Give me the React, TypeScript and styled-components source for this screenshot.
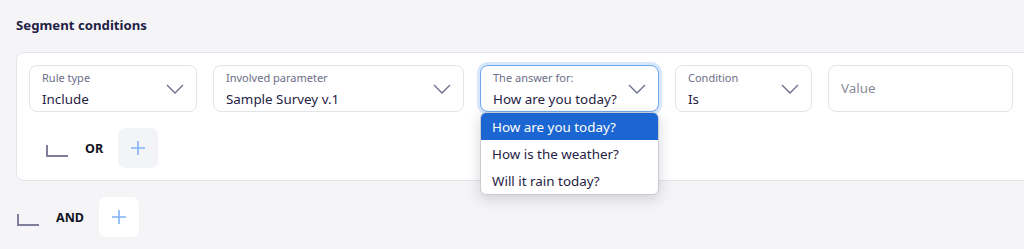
import styled, { createGlobalStyle } from 'styled-components';

const GlobalStyle = createGlobalStyle`
  html, body {
    margin: 0;
    padding: 0;
    background: #f5f5f8;
    font-family: "Noto Sans", "Open Sans", sans-serif;
    overflow: hidden;
  }
`

const Page = styled.div`
  width: 1024px;
  height: 249px;
  padding: 15px 0 0 16px;
  box-sizing: border-box;
  overflow: hidden;
`

const Title = styled.h2`
  margin: 0 0 17px 0;
  font-size: 13.2px;
  line-height: 20px;
  font-weight: 700;
  color: #1f2244;
`

const Card = styled.div`
  width: 1040px;
  box-sizing: border-box;
  background: #ffffff;
  border: 1px solid #e3e4ea;
  border-radius: 8px;
  padding: 12px 12px 12px 12px;
  display: flex;
  flex-direction: column;
  gap: 16px;
`

const FieldRow = styled.div`
  display: flex;
  gap: 16px;
`

const Field = styled.div<{ $width: number; $focused?: boolean }>`
  position: relative;
  width: ${p => p.$width}px;
  height: 47px;
  box-sizing: border-box;
  border: 1px solid ${p => (p.$focused ? '#6ea6ef' : '#e3e4ea')};
  box-shadow: ${p => (p.$focused ? '0 0 0 3px #d8e7fb' : 'none')};
  border-radius: 8px;
  background: #fff;
  padding: 4px 12px 0 12px;
  display: flex;
  align-items: center;
`

const FieldText = styled.div`
  flex: 1;
  display: flex;
  flex-direction: column;
  min-width: 0;
`

const Label = styled.span`
  font-size: 11px;
  line-height: 14px;
  color: #6b6e88;
`

const Value = styled.span`
  margin-top: 2px;
  font-size: 13.4px;
  line-height: 24px;
  color: #1f2244;
  white-space: nowrap;
`

const Placeholder = styled.span`
  font-size: 13.4px;
  color: #8a8c99;
  margin-top: -6px;
`

const Chevron = styled.svg`
  width: 18px;
  height: 10px;
  margin-top: -4px;
  flex-shrink: 0;
`

const Menu = styled.ul`
  position: absolute;
  top: 46px;
  left: -1px;
  width: 177px;
  margin: 0;
  padding: 0;
  list-style: none;
  background: #fff;
  border: 1px solid #c9cad2;
  border-radius: 6px;
  box-shadow: 0 4px 14px rgba(30, 34, 60, 0.18);
  overflow: hidden;
  z-index: 2;
`

const MenuItem = styled.li<{ $active?: boolean }>`
  height: 27px;
  padding: 0 11px;
  display: flex;
  align-items: center;
  font-size: 13.4px;
  color: ${p => (p.$active ? '#ffffff' : '#1f2244')};
  background: ${p => (p.$active ? '#1b66d2' : 'transparent')};
`

const Connector = styled.div<{ $indent: number }>`
  display: flex;
  align-items: center;
  height: 40px;
  padding-left: ${p => p.$indent}px;
`

const Corner = styled.span`
  width: 22px;
  height: 12px;
  margin-top: 5px;
  box-sizing: border-box;
  border-left: 2px solid #7d7f9c;
  border-bottom: 2px solid #7d7f9c;
  margin-right: 17px;
`

const Operator = styled.span`
  font-size: 12.5px;
  font-weight: 700;
  color: #111322;
  margin-right: 15px;
`

const AddButton = styled.button<{ $tinted?: boolean }>`
  width: 40px;
  height: 40px;
  border: none;
  border-radius: 7px;
  background: ${p => (p.$tinted ? '#f3f4f7' : '#ffffff')};
  display: flex;
  align-items: center;
  justify-content: center;
  padding: 0;
`

const Outer = styled.div`
  margin-top: 16px;
`

function ChevronIcon() {
  return (
    <Chevron viewBox="0 0 18 10">
      <path d="M1 1 L9 9 L17 1" fill="none" stroke="#6b6e88" strokeWidth="1.3" />
    </Chevron>
  )
}

function Plus() {
  return (
    <svg width="16" height="16" viewBox="0 0 16 16">
      <path d="M8 1 V15 M1 8 H15" stroke="#80b3f5" strokeWidth="1.6" />
    </svg>
  )
}

export default function App() {
  return (
    <>
      <GlobalStyle />
      <Page>
        <Title>Segment conditions</Title>
        <Card>
          <FieldRow>
            <Field $width={168}>
              <FieldText>
                <Label>Rule type</Label>
                <Value>Include</Value>
              </FieldText>
              <ChevronIcon />
            </Field>
            <Field $width={251}>
              <FieldText>
                <Label>Involved parameter</Label>
                <Value>Sample Survey v.1</Value>
              </FieldText>
              <ChevronIcon />
            </Field>
            <Field $width={179} $focused>
              <FieldText>
                <Label>The answer for:</Label>
                <Value>How are you today?</Value>
              </FieldText>
              <ChevronIcon />
              <Menu>
                <MenuItem $active>How are you today?</MenuItem>
                <MenuItem>How is the weather?</MenuItem>
                <MenuItem>Will it rain today?</MenuItem>
              </Menu>
            </Field>
            <Field $width={137}>
              <FieldText>
                <Label>Condition</Label>
                <Value>Is</Value>
              </FieldText>
              <ChevronIcon />
            </Field>
            <Field $width={185}>
              <FieldText>
                <Placeholder>Value</Placeholder>
              </FieldText>
            </Field>
          </FieldRow>
          <Connector $indent={17}>
            <Corner />
            <Operator>OR</Operator>
            <AddButton $tinted>
              <Plus />
            </AddButton>
          </Connector>
        </Card>
        <Outer>
          <Connector $indent={1}>
            <Corner />
            <Operator>AND</Operator>
            <AddButton>
              <Plus />
            </AddButton>
          </Connector>
        </Outer>
      </Page>
    </>
  )
}
